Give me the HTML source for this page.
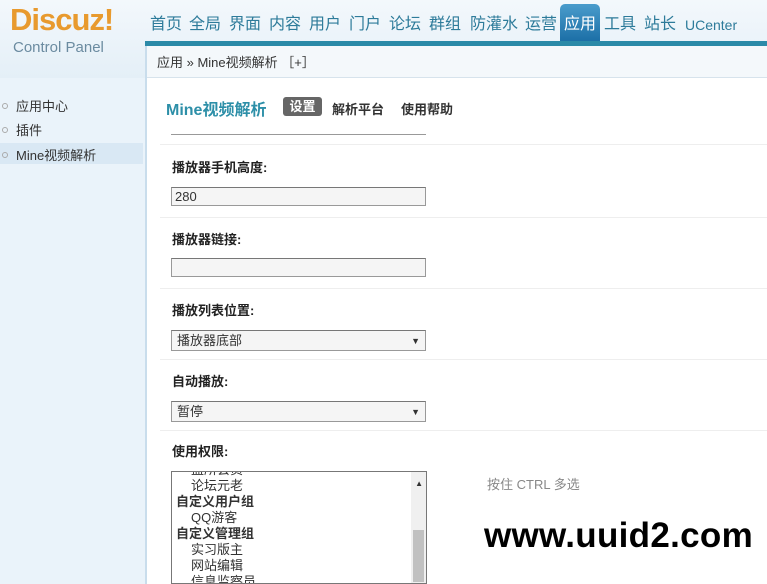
<!DOCTYPE html>
<html><head><meta charset="utf-8"><style>
body{margin:0;width:767px;height:584px;overflow:hidden;background:#fff;font-family:"Liberation Sans","Noto Sans CJK SC",sans-serif;font-size:12px;color:#333;position:relative}
.a{position:absolute}
#hd{left:0;top:0;width:767px;height:78px;background:linear-gradient(#f3f8fc,#e4eff7)}
#side{left:0;top:78px;width:145px;height:506px;background:#eaf3fa;border-right:2px solid #c9ddec}
#line{left:145px;top:41px;width:622px;height:5px;background:#2b8aa8}
#bc{left:147px;top:46px;width:620px;height:32px;background:#f4f8fb;border-bottom:1px solid #d7e3ec;font-size:13px;line-height:34px;padding-left:10px;box-sizing:border-box}
#bcl{left:145px;top:46px;width:2px;height:538px;background:#c9ddec}
.n{position:absolute;top:14px;font-size:16px;color:#2d7b9a;line-height:22px}
.act{left:560px;top:4px;width:40px;height:38px;background:linear-gradient(#4a9ccc,#1b6ea6);border-radius:5px 5px 0 0;color:#fff;font-size:16px;text-align:center;line-height:42px}
.lbl{left:172px;font-weight:bold;font-size:13px;color:#222}
.inp{left:171px;width:255px;height:19px;border:1px solid #999;border-top-color:#777;background:#f5f5f5;box-sizing:border-box;font-size:13px;line-height:17px;padding-left:3px}
.sep{left:160px;width:607px;height:1px;background:#eee}
.arr{position:absolute;right:5px;top:0;font-size:9px}
.si{left:0;font-size:13px;color:#333}
.si i{display:inline-block;width:4px;height:4px;border:1px solid #aaa;border-radius:50%;margin:0 8px 2px 2px}
</style></head><body>
<div class="a" id="hd"></div>
<div class="a" style="left:10px;top:2px;font-size:31px;font-weight:bold;color:#e89a2e;letter-spacing:-1px">Discuz!</div>
<div class="a" style="left:13px;top:39px;font-size:15px;color:#6b8ba0">Control Panel</div>
<div class="n" style="left:150px">首页</div>
<div class="n" style="left:189px">全局</div>
<div class="n" style="left:229px">界面</div>
<div class="n" style="left:269px">内容</div>
<div class="n" style="left:309px">用户</div>
<div class="n" style="left:349px">门户</div>
<div class="n" style="left:389px">论坛</div>
<div class="n" style="left:429px">群组</div>
<div class="n" style="left:470px">防灌水</div>
<div class="n" style="left:525px">运营</div>
<div class="a act">应用</div>
<div class="n" style="left:604px">工具</div>
<div class="n" style="left:644px">站长</div>
<div class="n" style="left:685px;font-size:14px">UCenter</div>
<div class="a" id="line"></div>
<div class="a" id="side"></div>
<div class="a" id="bc">应用 » Mine视频解析 ［+］</div>
<div class="a" id="bcl"></div>
<div class="a si" style="top:96px"><i></i>应用中心</div>
<div class="a si" style="top:120px"><i></i>插件</div>
<div class="a" style="left:0;top:143px;width:143px;height:21px;background:#d9e8f4"></div>
<div class="a si" style="top:145px"><i></i>Mine视频解析</div>
<div class="a" style="left:166px;top:96px;font-size:16px;font-weight:bold;color:#2d8fa8">Mine视频解析</div>
<div class="a" style="left:283px;top:97px;width:39px;height:19px;background:#666;border-radius:3px;color:#fff;font-weight:bold;font-size:13px;text-align:center;line-height:19px">设置</div>
<div class="a" style="left:332px;top:99px;font-weight:bold;font-size:13px">解析平台</div>
<div class="a" style="left:401px;top:99px;font-weight:bold;font-size:13px">使用帮助</div>
<div class="a" style="left:171px;top:134px;width:255px;height:1px;background:#999"></div>
<div class="a sep" style="top:144px"></div>
<div class="a lbl" style="top:157px">播放器手机高度:</div>
<div class="a inp" style="top:187px">280</div>
<div class="a sep" style="top:217px"></div>
<div class="a lbl" style="top:229px">播放器链接:</div>
<div class="a inp" style="top:258px"></div>
<div class="a sep" style="top:288px"></div>
<div class="a lbl" style="top:300px">播放列表位置:</div>
<div class="a inp" style="top:330px;height:21px;line-height:20px;padding-left:5px">播放器底部<span class="arr">▼</span></div>
<div class="a sep" style="top:359px"></div>
<div class="a lbl" style="top:371px">自动播放:</div>
<div class="a inp" style="top:401px;height:21px;line-height:20px;padding-left:5px">暂停<span class="arr">▼</span></div>
<div class="a sep" style="top:430px"></div>
<div class="a lbl" style="top:441px">使用权限:</div>
<div class="a" style="left:171px;top:471px;width:256px;height:113px;border:1px solid #777;background:#fff;overflow:hidden;box-sizing:border-box;font-size:13px;line-height:16px">
<div style="margin-top:-10px;padding-left:19px">监所会员</div>
<div style="padding-left:19px">论坛元老</div>
<div style="font-weight:bold;padding-left:4px">自定义用户组</div>
<div style="padding-left:19px">QQ游客</div>
<div style="font-weight:bold;padding-left:4px">自定义管理组</div>
<div style="padding-left:19px">实习版主</div>
<div style="padding-left:19px">网站编辑</div>
<div style="padding-left:19px">信息监察员</div>
<div style="position:absolute;right:0;top:0;width:15px;height:113px;background:#f0f0f0"></div>
<div style="position:absolute;right:3px;top:4px;font-size:8px">▲</div>
<div style="position:absolute;right:2px;top:58px;width:11px;height:52px;background:#c1c1c1"></div>
</div>
<div class="a" style="left:487px;top:474px;font-size:13px;color:#888">按住 CTRL 多选</div>
<div class="a" style="left:484px;top:516px;font-size:35px;font-weight:bold;color:#000;letter-spacing:0.3px">www.uuid2.com</div>
</body></html>
